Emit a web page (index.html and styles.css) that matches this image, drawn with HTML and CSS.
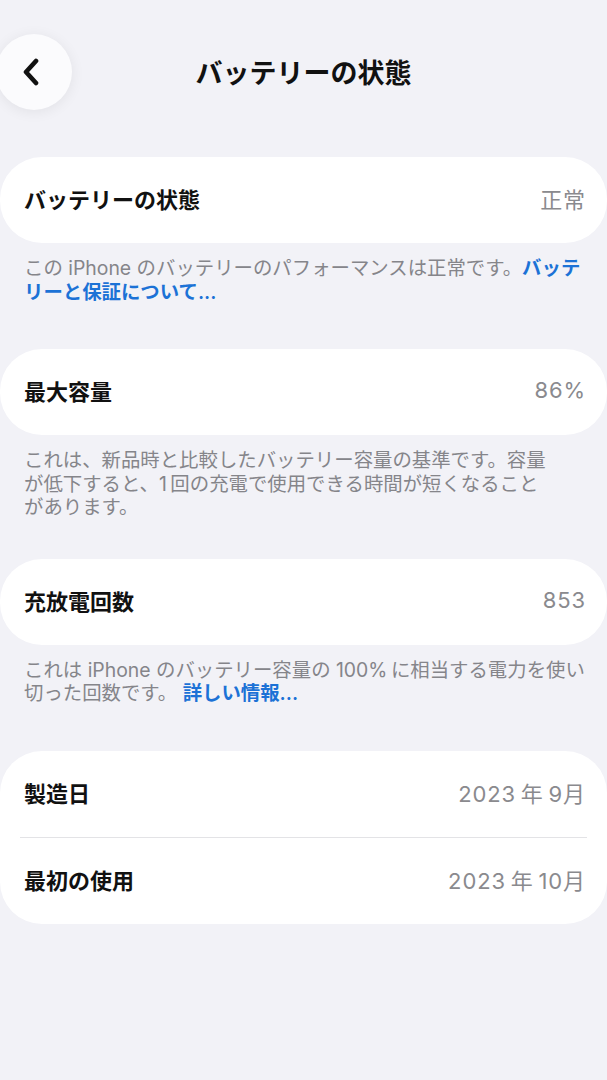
FILE: index.html
```html
<!DOCTYPE html>
<html lang="ja">
<head>
    <meta charset="UTF-8">
    <meta name="viewport" content="width=device-width, initial-scale=1.0">
    <title>バッテリーの状態</title>
    <link rel="stylesheet" href="styles.css">
</head>
<body>
    <header class="nav">
        <button class="back-btn" aria-label="戻る">
            <svg width="18" height="28" viewBox="0 0 18 28">
                <path d="M14 3 L4 14 L14 25" fill="none" stroke="#111" stroke-width="4.6" stroke-linecap="round" stroke-linejoin="round"/>
            </svg>
        </button>
        <h1 class="nav-title">バッテリーの状態</h1>
        <div class="nav-spacer"></div>
    </header>

    <section class="group">
        <div class="card">
            <div class="row">
                <span class="label">バッテリーの状態</span>
                <span class="value">正常</span>
            </div>
        </div>
        <p class="footer">この iPhone のバッテリーのパフォーマンスは正常です。<a href="#" class="link">バッテ<br>リーと保証について...</a></p>
    </section>

    <section class="group">
        <div class="card">
            <div class="row">
                <span class="label">最大容量</span>
                <span class="value">86%</span>
            </div>
        </div>
        <p class="footer">これは、新品時と比較したバッテリー容量の基準です。容量<br>が低下すると、1&thinsp;回の充電で使用できる時間が短くなること<br>があります。</p>
    </section>

    <section class="group group-tight">
        <div class="card">
            <div class="row">
                <span class="label">充放電回数</span>
                <span class="value">853</span>
            </div>
        </div>
        <p class="footer">これは iPhone のバッテリー容量の 100%&thinsp;に相当する電力を使い<br>切った回数です。 <a href="#" class="link">詳しい情報...</a></p>
    </section>

    <section class="group">
        <div class="card">
            <div class="row">
                <span class="label">製造日</span>
                <span class="value">2023&thinsp;年&thinsp;9月</span>
            </div>
            <div class="divider"></div>
            <div class="row">
                <span class="label">最初の使用</span>
                <span class="value">2023&thinsp;年&thinsp;10月</span>
            </div>
        </div>
    </section>
</body>
</html>
```

FILE: styles.css
```css
body {
    margin: 0;
    padding: 0;
    background-color: #f2f2f7;
    font-family: Inter, "Noto Sans CJK JP", sans-serif;
    color: #111;
    min-height: 100vh;
}

/* Navigation bar */
.nav {
    display: flex;
    align-items: center;
    padding-top: 34px;
}

.back-btn {
    width: 76px;
    height: 76px;
    margin-left: -4px;
    padding: 0 6px 0 0;
    border: none;
    border-radius: 50%;
    background-color: #fbfbfd;
    box-shadow: 0 2px 14px rgba(0, 0, 0, 0.07);
    display: flex;
    align-items: center;
    justify-content: center;
    flex-shrink: 0;
    cursor: pointer;
}

.nav-title {
    flex: 1;
    margin: 0 0 2px;
    text-align: center;
    font-size: 27px;
    font-weight: 700;
    color: #111;
}

.nav-spacer {
    width: 72px;
    flex-shrink: 0;
}

/* Grouped list */
.group {
    margin-top: 45px;
}

.group:first-of-type {
    margin-top: 47px;
}

.group-tight {
    margin-top: 39px;
}

.card {
    background-color: #fff;
    border-radius: 42px;
}

.row {
    height: 86px;
    box-sizing: border-box;
    display: flex;
    align-items: center;
    justify-content: space-between;
    padding: 0 21px 4px 24px;
}

.label {
    font-size: 22px;
    font-weight: 600;
    color: #111;
}

.value {
    font-size: 22px;
    letter-spacing: 0.04em;
    color: #8a8a8e;
}

.divider {
    height: 1px;
    margin: 0 20px;
    background-color: #e3e3e6;
}

.footer {
    margin: 0;
    padding: 14px 8px 0 24px;
    font-size: 19.4px;
    line-height: 23.5px;
    color: #85858a;
}

.link {
    color: #1c72d6;
    font-weight: 600;
    text-decoration: none;
}
```
